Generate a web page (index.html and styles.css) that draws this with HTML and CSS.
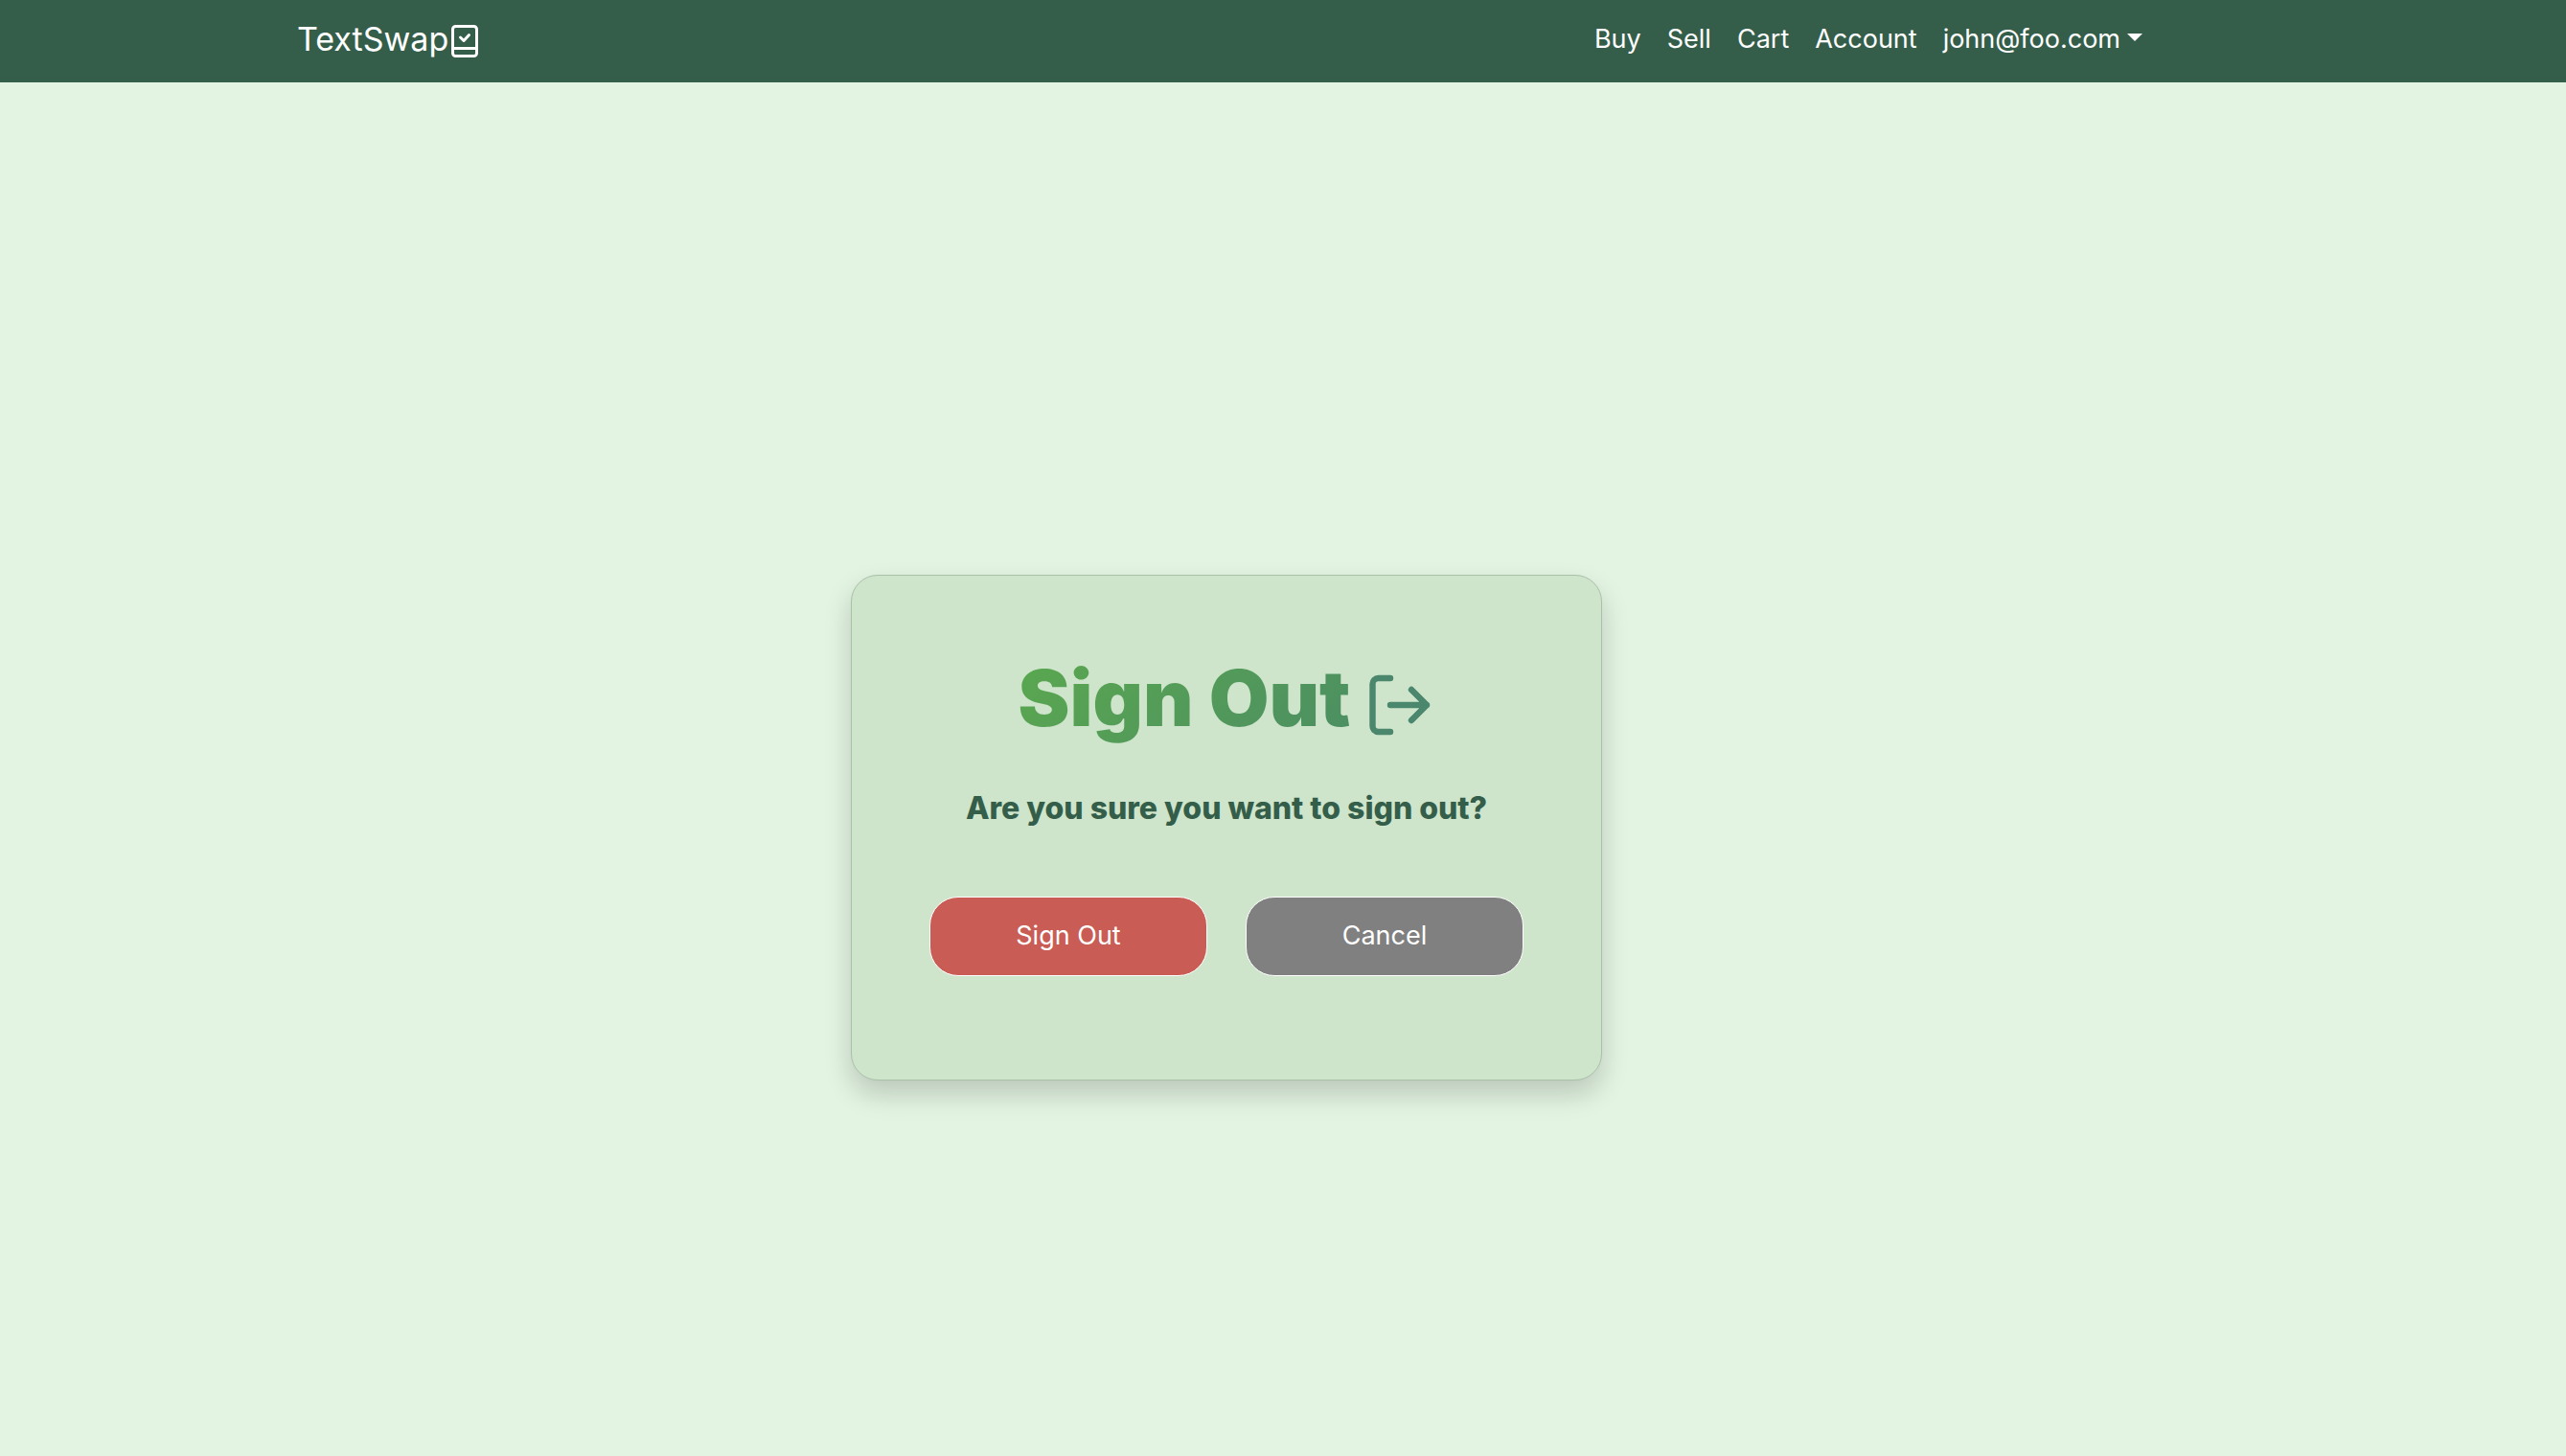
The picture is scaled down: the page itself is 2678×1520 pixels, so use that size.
FILE: index.html
```html
<!DOCTYPE html>
<html lang="en">
<head>
  <meta charset="utf-8">
  <meta name="viewport" content="width=device-width, initial-scale=1">
  <title>TextSwap - Sign Out</title>
  <link rel="stylesheet" href="styles.css">
</head>
<body>
  <header class="navbar">
    <div class="navbar-inner">
      <a class="brand" href="#">TextSwap
        <svg class="brand-icon" viewBox="0 0 28 34" fill="none" stroke="currentColor" stroke-width="3" stroke-linecap="round" stroke-linejoin="round" aria-hidden="true">
          <rect x="1.5" y="1.500" width="25" height="31" rx="3"/>
          <path d="M2 24.500H26M9.500 13l3.500 3.500 5.500-6"/>
        </svg>
      </a>
      <nav class="nav-links">
        <a href="#">Buy</a>
        <a href="#">Sell</a>
        <a href="#">Cart</a>
        <a href="#">Account</a>
        <a class="user-menu" href="#">john@foo.com</a>
      </nav>
    </div>
  </header>
  <main class="page">
    <section class="card">
      <h1 class="title">
        <span class="title-text">Sign Out</span>
        <svg class="title-icon" viewBox="0 0 64 64" fill="none" stroke="currentColor" stroke-width="6.400" stroke-linecap="round" stroke-linejoin="round" aria-hidden="true">
          <path d="M22 4H9.500a6 6 0 0 0-6 6v44a6 6 0 0 0 6 6H22M22 32H60M44 16L60 32L44 48"/>
        </svg>
      </h1>
      <p class="question">Are you sure you want to sign out?</p>
      <div class="actions">
        <button class="btn btn-danger" type="button">Sign Out</button>
        <button class="btn btn-neutral" type="button">Cancel</button>
      </div>
    </section>
  </main>
</body>
</html>
```
FILE: styles.css
```css
* {
  box-sizing: border-box;
}

body {
  margin: 0;
  min-height: 100vh;
  display: flex;
  flex-direction: column;
  background: #e3f4e2;
  color: #fff;
  font-family: Inter, "Liberation Sans", sans-serif;
  font-size: 27px;
}

.navbar {
  background: #345e4a;
  padding-right: 118px;
}

.navbar-inner {
  display: flex;
  align-items: center;
  justify-content: space-between;
  max-width: 1940px;
  min-height: 86px;
  margin: 0 auto;
  padding: 0 14px 5px 0;
}

.navbar a {
  color: inherit;
  text-decoration: none;
}

.brand {
  display: flex;
  align-items: center;
  gap: 3px;
  font-size: 34px;
}

.brand-icon {
  width: 28px;
  height: 34px;
  margin-top: 4px;
}

.nav-links {
  display: flex;
  gap: 27px;
}

.user-menu {
  display: flex;
  align-items: center;
  gap: 7px;
}

.user-menu::after {
  content: "";
  margin-bottom: 4px;
  border: 8px solid transparent;
  border-top-color: currentColor;
  border-bottom: 0;
}

.page {
  flex: 1;
  display: flex;
  align-items: center;
  justify-content: center;
  padding: 122px 118px 0 0;
}

.card {
  width: 100%;
  max-width: 784px;
  min-height: 528px;
  padding: 78px;
  border: 1px solid #a9c0a9;
  border-radius: 28px;
  background: #cee5cb;
  box-shadow: 0 14px 28px rgba(0, 0, 0, 0.18);
}

.title {
  display: flex;
  align-items: center;
  justify-content: center;
  gap: 20px;
  margin: 0;
  padding-right: 4px;
  font-size: 81px;
  font-weight: 900;
  line-height: 100px;
}

.title-text {
  background: linear-gradient(135deg, #5aa84f, #4c8e63);
  background-clip: text;
  -webkit-background-clip: text;
  color: transparent;
}

.title-icon {
  width: 64px;
  height: 64px;
  margin-top: 14px;
  color: #4a876d;
}

.question {
  margin: 45px 0 72px;
  color: #345e4a;
  font-size: 32px;
  font-weight: 800;
  line-height: 40px;
  text-align: center;
}

.actions {
  display: flex;
  justify-content: center;
  gap: 40px;
}

.btn {
  width: 290px;
  height: 83px;
  padding: 0 0 2px;
  border: 1px solid #fff;
  border-radius: 30px;
  color: #fff;
  font: inherit;
}

.btn-danger {
  background: #c95c54;
}

.btn-neutral {
  background: #808080;
}
```
